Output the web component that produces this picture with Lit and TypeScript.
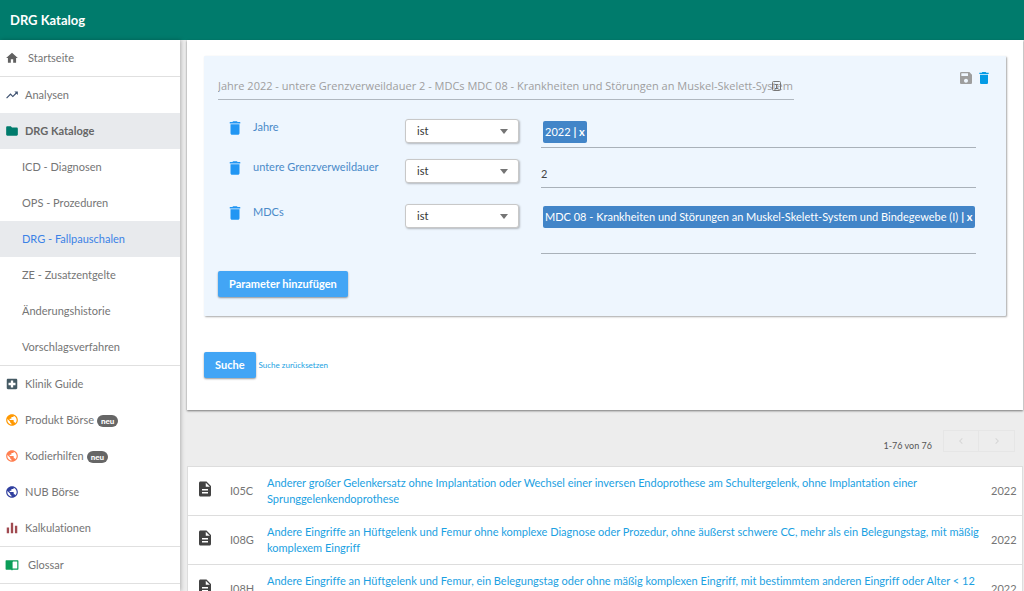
import { LitElement, html, css, svg, nothing } from "lit";
import { customElement, property, state } from "lit/decorators.js";

const ICONS = {
  home: "M10 20v-6h4v6h5v-8h3L12 3 2 12h3v8z",
  trend: "M16 6l2.29 2.29-4.88 4.88-4-4L2 16.59 3.41 18l6-6 4 4 6.3-6.29L22 12V6z",
  folder: "M10 4H4c-1.1 0-2 .9-2 2v12c0 1.1.9 2 2 2h16c1.1 0 2-.9 2-2V8c0-1.1-.9-2-2-2h-8l-2-2z",
  hospital: "M19 3H5c-1.1 0-2 .9-2 2v14c0 1.1.9 2 2 2h14c1.1 0 2-.9 2-2V5c0-1.1-.9-2-2-2zm-1 11h-4v4h-4v-4H6v-4h4V6h4v4h4v4z",
  globe: "M12 2C6.48 2 2 6.48 2 12s4.48 10 10 10 10-4.48 10-10S17.52 2 12 2zm-1 17.93c-3.95-.49-7-3.85-7-7.93 0-.62.08-1.21.21-1.79L9 15v1c0 1.1.9 2 2 2v1.93zm6.9-2.54c-.26-.81-1-1.39-1.9-1.39h-1v-3c0-.55-.45-1-1-1H8v-2h2c.55 0 1-.45 1-1V7h2c1.1 0 2-.9 2-2v-.41c2.93 1.19 5 4.06 5 7.41 0 2.08-.8 3.97-2.1 5.39z",
  bars: "M3 11h4v10H3zM10 3h4v18h-4zM17 8h4v13h-4z",
  book: "M21 4H2c-.6 0-1 .4-1 1v14c0 .6.4 1 1 1h8.500l1.500 1.500L13.500 20H22c.6 0 1-.4 1-1V5c0-.6-.4-1-1-1zm0 14h-8V7l1-1h7z",
  trash: "M6 19c0 1.1.9 2 2 2h8c1.1 0 2-.9 2-2V7H6v12zM19 4h-3.500l-1-1h-5l-1 1H5v2h14V4z",
  save: "M17 3H5c-1.11 0-2 .9-2 2v14c0 1.100.89 2 2 2h14c1.100 0 2-.9 2-2V7l-4-4zm-5 16c-1.660 0-3-1.340-3-3s1.340-3 3-3 3 1.340 3 3-1.340 3-3 3zm3-10H5V5h10v4z",
  doc: "M14 2H6c-1.100 0-1.990.9-1.990 2L4 20c0 1.100.89 2 1.990 2H18c1.100 0 2-.9 2-2V8l-6-6zm2 16H8v-2h8v2zm0-4H8v-2h8v2zm-3-5V3.500L18.500 9H13z",
  left: "M15.410 7.410 14 6l-6 6 6 6 1.410-1.410L10.830 12z",
  right: "M10 6 8.590 7.410 13.170 12l-4.580 4.590L10 18l6-6z",
};
type IconName = keyof typeof ICONS;

@customElement("app-icon")
class AppIcon extends LitElement {
  @property() name: IconName = "home";
  static styles = css`
    :host { display: inline-flex; width: 14px; height: 14px; flex: none; }
    svg { width: 100%; height: 100%; fill: currentColor; }
  `;
  render() {
    return html`<svg viewBox="0 0 24 24" aria-hidden="true">${svg`<path d=${ICONS[this.name]}></path>`}</svg>`;
  }
}

interface NavItem {
  label: string;
  icon?: IconName;
  tone?: string;
  badge?: string;
  kind?: "top" | "sub" | "open";
  active?: boolean;
}

const NAV: NavItem[][] = [
  [{ label: "Startseite", icon: "home", tone: "grey", kind: "top" }],
  [
    { label: "Analysen", icon: "trend", tone: "navy" },
    { label: "DRG Kataloge", icon: "folder", tone: "teal", kind: "open" },
    { label: "ICD - Diagnosen", kind: "sub" },
    { label: "OPS - Prozeduren", kind: "sub" },
    { label: "DRG - Fallpauschalen", kind: "sub", active: true },
    { label: "ZE - Zusatzentgelte", kind: "sub" },
    { label: "Änderungshistorie", kind: "sub" },
    { label: "Vorschlagsverfahren", kind: "sub" },
  ],
  [
    { label: "Klinik Guide", icon: "hospital", tone: "slate" },
    { label: "Produkt Börse", icon: "globe", tone: "amber", badge: "neu" },
    { label: "Kodierhilfen", icon: "globe", tone: "coral", badge: "neu" },
    { label: "NUB Börse", icon: "globe", tone: "indigo" },
    { label: "Kalkulationen", icon: "bars", tone: "wine" },
  ],
  [{ label: "Glossar", icon: "book", tone: "green", kind: "top" }],
];

@customElement("app-nav")
class AppNav extends LitElement {
  static styles = css`
    :host { display: block; background: #fff; box-shadow: 1px 0 4px rgba(0, 0, 0, 0.25); }
    .group { list-style: none; margin: 0; padding: 0; border-bottom: 1px solid #e0e0e0; }
    .item { display: flex; align-items: center; height: 36px; padding-left: 5px; color: #757575; text-decoration: none; }
    .label { margin-left: 6px; padding-bottom: 2px; }
    .top .label { margin-left: 9px; }
    .sub { padding-left: 16px; }
    .open { background: #e8eaed; color: #666; font-weight: 700; }
    .active { background: #e8eaed; color: #3b82e6; }
    .badge { margin: 2px 0 0 3px; padding: 0 4px; border-radius: 6px; background: #666; color: #fff; font-size: 8px; font-weight: 900; line-height: 12px; }
    .grey { color: #616161; }
    .navy { color: #3d5170; }
    .teal { color: #007b6c; }
    .slate { color: #455a64; }
    .amber { color: #ff9800; }
    .coral { color: #ff7f50; }
    .indigo { color: #303f9f; }
    .wine { color: #a04a50; }
    .green { color: #0a9d58; }
  `;
  render() {
    return html`<nav>
      ${NAV.map((group) => html`<ul class="group">
        ${group.map((i) => html`<li>
          <a href="#" class="item ${i.kind ?? ""} ${i.active ? "active" : ""}">
            ${i.icon ? html`<app-icon class=${i.tone ?? ""} name=${i.icon}></app-icon>` : nothing}
            <span class="label">${i.label}</span>
            ${i.badge ? html`<span class="badge">${i.badge}</span>` : nothing}
          </a>
        </li>`)}
      </ul>`)}
    </nav>`;
  }
}

interface Param {
  id: string;
  name: string;
  chip?: string;
  value?: string;
  tall?: boolean;
}

const PARAMS: Param[] = [
  { id: "jahre", name: "Jahre", chip: "2022" },
  { id: "ugv", name: "untere Grenzverweildauer", value: "2" },
  { id: "mdc", name: "MDCs", chip: "MDC 08 - Krankheiten und Störungen an Muskel-Skelett-System und Bindegewebe (I)", tall: true },
];

@customElement("app-filter")
class AppFilter extends LitElement {
  @state() private title = "Jahre 2022 - untere Grenzverweildauer 2 - MDCs MDC 08 - Krankheiten und Störungen an Muskel-Skelett-System und Bindegewebe (I)";
  static styles = css`
    :host { display: block; background: #fff; padding: 16px 17px 32px; box-shadow: 0 1px 2px rgba(0, 0, 0, 0.5); }
    button, input, select { font: inherit; }
    .panel { background: #eef6fe; padding: 14px 14px 19px; border-radius: 1px; box-shadow: 1px 1px 2px rgba(0, 0, 0, 0.35); }
    .head { display: flex; justify-content: space-between; align-items: flex-start; }
    .name { position: relative; flex: 0 1 576px; }
    .name-input { display: block; box-sizing: border-box; width: 100%; height: 30px; padding: 2px 0 0; border: 0; border-bottom: 1px solid #b0b8c0; background: none; color: #9e9e9e; font-family: "Open Sans", sans-serif; outline: 0; }
    .mark { position: absolute; right: 12px; top: 10px; width: 11px; height: 12px; color: #777; }
    .tools { display: flex; align-items: center; gap: 2px; }
    .icon-btn { display: flex; padding: 0; border: 0; background: none; color: #2196f3; }
    .tools .icon-btn app-icon { width: 16px; height: 16px; }
    .save { color: #9e9e9e; }
    .remove { color: #039be5; }
    .params { padding-top: 9px; }
    .row { display: grid; grid-template-columns: 35px 152px 115px minmax(0, 1fr); height: 40px; padding-right: 16px; }
    .number { padding-bottom: 5px; }
    .tall { height: 60px; }
    .del { grid-column: 1; align-self: start; padding: 10px 0 0 8px; }
    .del app-icon { width: 18px; height: 18px; }
    .label { padding-top: 10px; line-height: 16px; color: #4a8ac9; white-space: nowrap; }
    .op { position: relative; margin-top: 10px; height: 24px; }
    .select { appearance: none; width: 114px; height: 24px; padding: 0 11px 2px; border: 1px solid #c8c8c8; border-radius: 3px; background: #fff; color: #333; box-shadow: 1px 1px 2px rgba(0, 0, 0, 0.25); }
    .arrow { position: absolute; right: 12px; top: 10px; border: 4px solid transparent; border-top: 5px solid #757575; border-bottom: 0; pointer-events: none; }
    .field { display: flex; align-items: flex-start; box-sizing: border-box; margin-left: 21px; height: 39px; border-bottom: 1px solid #a9b1b9; }
    .tall .field { height: 60px; }
    .text { width: 100%; height: 100%; box-sizing: border-box; padding: 11px 0 0; border: 0; background: none; outline: 0; color: #444; }
    .chip { display: flex; margin: 12px 0 0 2px; padding: 0 2px; border-radius: 2px; background: #4285c8; color: #fff; line-height: 22px; white-space: nowrap; }
    .chip-x { padding: 0 0 0 3px; border: 0; background: none; color: #fff; font-weight: 700; line-height: 22px; }
    .btn { border: 0; height: 26px; padding: 0 11px 2px; border-radius: 2px; background: #42a5f5; color: #fff; font-weight: 700; box-shadow: 0 1px 2px rgba(0, 0, 0, 0.4); }
    .add { margin-top: 17px; display: block; }
    .actions { display: flex; align-items: center; gap: 3px; margin-top: 36px; }
    .reset { color: #1ba1e2; font-size: 8px; text-decoration: none; }
  `;
  render() {
    return html`
      <section class="panel">
        <div class="head">
          <div class="name">
            <input class="name-input" aria-label="Name der Suche" .value=${this.title}
              @input=${(e: Event) => (this.title = (e.target as HTMLInputElement).value)} />
            <svg class="mark" viewBox="0 0 11 12" fill="none" stroke="currentColor" aria-hidden="true">
              <rect x="1.500" y="1.500" width="8" height="9" rx="1"></rect>
              <path d="M4 4.500h3M4 8.500h3M5.500 4.500v4"></path>
            </svg>
          </div>
          <div class="tools">
            <button class="icon-btn save" aria-label="Speichern"><app-icon name="save"></app-icon></button>
            <button class="icon-btn remove" aria-label="Löschen"><app-icon name="trash"></app-icon></button>
          </div>
        </div>
        <div class="params">
          ${PARAMS.map((p) => html`<div class="row ${p.tall ? "tall" : ""} ${p.value ? "number" : ""}">
            <button class="icon-btn del" aria-label="${p.name} entfernen"><app-icon name="trash"></app-icon></button>
            <label class="label" for=${p.id}>${p.name}</label>
            <div class="op">
              <select class="select" id=${p.id}><option>ist</option></select>
              <span class="arrow"></span>
            </div>
            <div class="field">
              ${p.chip
                ? html`<span class="chip">${p.chip}<button class="chip-x" aria-label="${p.chip} entfernen">| x</button></span>`
                : html`<input class="text" aria-label=${p.name} .value=${p.value ?? ""} />`}
            </div>
          </div>`)}
        </div>
        <button class="btn add">Parameter hinzufügen</button>
      </section>
      <div class="actions">
        <button class="btn">Suche</button>
        <a class="reset" href="#">Suche zurücksetzen</a>
      </div>
    `;
  }
}

const ROWS = [
  ["I05C", "Anderer großer Gelenkersatz ohne Implantation oder Wechsel einer inversen Endoprothese am Schultergelenk, ohne Implantation einer Sprunggelenkendoprothese"],
  ["I08G", "Andere Eingriffe an Hüftgelenk und Femur ohne komplexe Diagnose oder Prozedur, ohne äußerst schwere CC, mehr als ein Belegungstag, mit mäßig komplexem Eingriff"],
  ["I08H", "Andere Eingriffe an Hüftgelenk und Femur, ein Belegungstag oder ohne mäßig komplexen Eingriff, mit bestimmtem anderen Eingriff oder Alter < 12 Jahre"],
];

@customElement("app-results")
class AppResults extends LitElement {
  static styles = css`
    :host { display: block; }
    .pager { display: flex; justify-content: flex-end; align-items: flex-start; gap: 11px; padding: 20px 8px 12px; }
    .count { margin-top: 8px; font-size: 9px; line-height: 16px; color: #555; }
    .pages { display: flex; }
    .page { display: flex; align-items: center; justify-content: center; box-sizing: border-box; width: 36px; height: 22px; padding: 0; border: 1px solid #e6e6e6; background: none; color: #d6d6d6; }
    .page + .page { border-left: 0; }
    .page app-icon { width: 12px; height: 12px; }
    .table { width: 100%; border-spacing: 0; background: #fff; border: 1px solid #ddd; border-top: 0; }
    .table td { box-sizing: border-box; height: 49px; padding: 0 0 1px; border-top: 1px solid #ddd; vertical-align: middle; line-height: 16px; }
    .icon { width: 42px; color: #424242; }
    .icon app-icon { display: flex; width: 18px; height: 18px; margin: -4px 0 0 8px; }
    .code, .year { color: #757575; }
    .code { width: 37px; }
    .year { width: 31px; }
    .link { color: #1ba1e2; text-decoration: none; }
  `;
  render() {
    return html`
      <div class="pager">
        <span class="count">1-76 von 76</span>
        <div class="pages">
          <button class="page" disabled aria-label="Zurück"><app-icon name="left"></app-icon></button>
          <button class="page" disabled aria-label="Weiter"><app-icon name="right"></app-icon></button>
        </div>
      </div>
      <table class="table">
        <tbody>
          ${ROWS.map(([code, title]) => html`<tr>
            <td class="icon"><app-icon name="doc"></app-icon></td>
            <td class="code">${code}</td>
            <td><a class="link" href="#">${title}</a></td>
            <td class="year">2022</td>
          </tr>`)}
        </tbody>
      </table>
    `;
  }
}

@customElement("app-root")
class AppRoot extends LitElement {
  static styles = css`
    :host { display: flex; flex-direction: column; height: 100vh; overflow: hidden; background: #ededed; font: 11px Lato, "Open Sans", sans-serif; font-variant-ligatures: none; }
    .bar { flex: none; height: 40px; display: flex; align-items: center; padding: 0 10px; background: #007b6c; color: #fff; }
    .brand { margin: 0; font-size: 13px; font-weight: 700; }
    .body { flex: 1; min-height: 0; display: flex; }
    .side { flex: 0 0 180px; }
    .main { flex: 1; min-width: 0; padding: 0 1px 0 7px; }
  `;
  render() {
    return html`
      <header class="bar"><h1 class="brand">DRG Katalog</h1></header>
      <div class="body">
        <app-nav class="side"></app-nav>
        <main class="main">
          <app-filter></app-filter>
          <app-results></app-results>
        </main>
      </div>
    `;
  }
}
